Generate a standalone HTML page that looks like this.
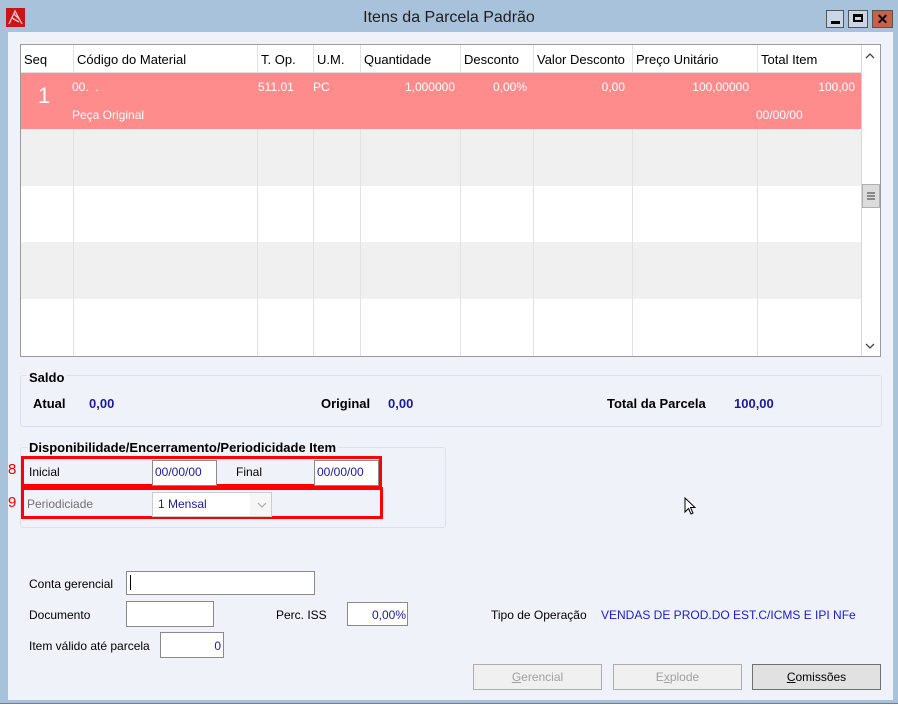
<!DOCTYPE html>
<html><head><meta charset="utf-8"><style>
*{box-sizing:border-box;margin:0;padding:0}
body{width:898px;height:708px;background:#fff;font-family:"Liberation Sans",sans-serif;font-size:12px;color:#000;position:relative;overflow:hidden}
.a{position:absolute}
.win{left:0;top:0;width:898px;height:704px;background:#a9c2dc;border-bottom:1px solid #6a7f95}
.body{left:8px;top:32px;width:885px;height:668px;background:#f0f2f9}
.t{position:absolute;white-space:nowrap}
.grid{left:20px;top:44px;width:861px;height:313px;border:1px solid #9a9a9a;background:#fff;overflow:hidden}
.hd{font-size:13px;top:7px}
.vl{position:absolute;top:0;width:1px;background:#e2e2e2;height:313px}
.w{color:#fff;font-size:12px}
.box{position:absolute;background:#fff;border:1px solid #8a8a8a}
.blue{color:#1a1aa0}
.btn{position:absolute;height:26px;border:1px solid #adadad;background:#f0f0f0;color:#a0a0a0;text-align:center;line-height:24px;font-size:12px}
</style></head><body>
<div class="a win"></div>
<div class="a" style="left:6px;top:8px;width:19px;height:19px;background:#c8151b"></div>
<svg class="a" style="left:6px;top:8px" width="19" height="19"><path d="M3 16 L9 3 L16 16 M6 10 L13 14 M8 6 L14 12" stroke="#f8c0c0" stroke-width="1.3" fill="none"/></svg>
<div class="t" style="left:0;width:898px;text-align:center;top:9px;font-size:16px;color:#1e1e1e">Itens da Parcela Padrão</div>
<div class="a" style="left:826px;top:10px;width:18px;height:18px;border:1px solid #555;background:#c8d6e6"></div>
<div class="a" style="left:831px;top:21px;width:9px;height:3px;background:#000"></div>
<div class="a" style="left:848px;top:10px;width:20px;height:18px;border:1px solid #555;background:#c8d6e6"></div>
<div class="a" style="left:853px;top:14px;width:10px;height:8px;border:2px solid #000;border-top-width:3px"></div>
<div class="a" style="left:872px;top:10px;width:21px;height:18px;border:1px solid #555;background:#c8604a;color:#000;font-weight:bold;text-align:center;line-height:16px;font-size:14px">✕</div>
<div class="a body"></div>

<div class="a grid">
 <div class="a" style="left:0;top:0;width:840px;height:28px;background:#fff;border-bottom:1px solid #e0e0e0"></div>
 <div class="a" style="left:0;top:84px;width:840px;height:57px;background:#f0f0f0"></div>
 <div class="a" style="left:0;top:197px;width:840px;height:57px;background:#f0f0f0"></div>
 <div class="vl" style="left:52px"></div><div class="vl" style="left:236px"></div><div class="vl" style="left:292px"></div><div class="vl" style="left:339px"></div><div class="vl" style="left:439px"></div><div class="vl" style="left:512px"></div><div class="vl" style="left:611px"></div><div class="vl" style="left:736px"></div>
 <div class="a" style="left:0;top:28px;width:840px;height:56px;background:#ff8c8c"></div>
 <div class="t hd" style="left:3px">Seq</div>
 <div class="t hd" style="left:56px">Código do Material</div>
 <div class="t hd" style="left:240px">T. Op.</div>
 <div class="t hd" style="left:296px">U.M.</div>
 <div class="t hd" style="left:343px">Quantidade</div>
 <div class="t hd" style="left:443px">Desconto</div>
 <div class="t hd" style="left:516px">Valor Desconto</div>
 <div class="t hd" style="left:615px">Preço Unitário</div>
 <div class="t hd" style="left:740px">Total Item</div>
 <div class="t w" style="left:17px;top:38px;font-size:22px">1</div>
 <div class="t w" style="left:51px;top:35px">00. &nbsp;.</div>
 <div class="t w" style="left:237px;top:35px">511.01</div>
 <div class="t w" style="left:292px;top:35px">PC</div>
 <div class="t w" style="right:425px;top:35px">1,000000</div>
 <div class="t w" style="right:353px;top:35px">0,00%</div>
 <div class="t w" style="right:255px;top:35px">0,00</div>
 <div class="t w" style="right:131px;top:35px">100,00000</div>
 <div class="t w" style="right:25px;top:35px">100,00</div>
 <div class="t w" style="left:51px;top:63px">Peça Original</div>
 <div class="t w" style="left:735px;top:63px">00/00/00</div>
 <div class="a" style="left:840px;top:0;width:19px;height:311px;background:#fff;border-left:1px solid #d8d8d8"></div>
 <svg class="a" style="left:843px;top:7px" width="12" height="8"><path d="M2 6 L6 2 L10 6" stroke="#444" fill="none" stroke-width="1.3"/></svg>
 <div class="a" style="left:841px;top:139px;width:18px;height:24px;background:#dcdcdc;border:1px solid #b0b0b0"></div>
 <svg class="a" style="left:844px;top:145px" width="12" height="12"><path d="M2 3 H10 M2 6 H10 M2 9 H10" stroke="#555" stroke-width="1.3"/></svg>
 <svg class="a" style="left:843px;top:297px" width="12" height="8"><path d="M2 2 L6 6 L10 2" stroke="#444" fill="none" stroke-width="1.3"/></svg>
</div>

<div class="a" style="left:20px;top:375px;width:862px;height:52px;border:1px solid #dde0e8;border-radius:3px"></div>
<div class="t" style="left:26px;top:370px;background:#f0f2f9;padding:0 3px;font-weight:bold;font-size:13px">Saldo</div>
<div class="t" style="left:33px;top:396px;font-weight:bold;font-size:13px">Atual</div>
<div class="t blue" style="left:89px;top:396px;font-weight:bold;font-size:13px">0,00</div>
<div class="t" style="left:321px;top:396px;font-weight:bold;font-size:13px">Original</div>
<div class="t blue" style="left:388px;top:396px;font-weight:bold;font-size:13px">0,00</div>
<div class="t" style="left:607px;top:396px;font-weight:bold;font-size:13px">Total da Parcela</div>
<div class="t blue" style="left:734px;top:396px;font-weight:bold;font-size:13px">100,00</div>

<div class="a" style="left:20px;top:447px;width:426px;height:81px;border:1px solid #dde0e8;border-radius:3px"></div>
<div class="t" style="left:27px;top:440px;background:#f0f2f9;padding:0 2px;font-weight:bold;font-size:13px">Disponibilidade/Encerramento/Periodicidade Item</div>
<div class="a" style="left:21px;top:456px;width:361px;height:31px;border:3px solid #f00"></div>
<div class="a" style="left:21px;top:487px;width:362px;height:32px;border:3px solid #f00"></div>
<div class="t" style="left:8px;top:461px;color:#e00;font-size:15px">8</div>
<div class="t" style="left:8px;top:494px;color:#e00;font-size:15px">9</div>
<div class="t" style="left:29px;top:465px">Inicial</div>
<div class="box" style="left:152px;top:460px;width:65px;height:26px"></div>
<div class="t blue" style="left:155px;top:465px">00/00/00</div>
<div class="t" style="left:236px;top:465px">Final</div>
<div class="box" style="left:314px;top:460px;width:65px;height:26px"></div>
<div class="t blue" style="left:317px;top:465px">00/00/00</div>
<div class="t" style="left:27px;top:497px;color:#707070">Periodiciade</div>
<div class="a" style="left:152px;top:492px;width:120px;height:25px;border:1px solid #ccc;background:#fff"></div>
<div class="a" style="left:250px;top:493px;width:21px;height:23px;background:#f6f6f6"></div>
<div class="t blue" style="left:158px;top:497px">1 Mensal</div>
<svg class="a" style="left:256px;top:501px" width="12" height="8"><path d="M2 2 L6 6 L10 2" stroke="#aaa" fill="none" stroke-width="1.2"/></svg>

<svg class="a" style="left:684px;top:497px" width="13" height="20"><path d="M1 1 L1 15 L4.5 11.5 L7 17 L9 16 L6.5 10.5 L11 10.5 Z" fill="#fff" stroke="#000" stroke-width="1"/></svg>

<div class="t" style="left:29px;top:577px">Conta gerencial</div>
<div class="box" style="left:126px;top:571px;width:189px;height:24px"></div>
<div class="a" style="left:130px;top:575px;width:1px;height:15px;background:#000"></div>
<div class="t" style="left:29px;top:608px">Documento</div>
<div class="box" style="left:126px;top:601px;width:88px;height:26px"></div>
<div class="t" style="left:276px;top:608px">Perc. ISS</div>
<div class="box" style="left:347px;top:602px;width:61px;height:24px"></div>
<div class="t blue" style="right:492px;top:608px">0,00%</div>
<div class="t" style="left:491px;top:608px">Tipo de Operação</div>
<div class="t" style="left:601px;top:608px;color:#1a1ad0">VENDAS DE PROD.DO EST.C/ICMS E IPI NFe</div>
<div class="t" style="left:29px;top:639px">Item válido até parcela</div>
<div class="box" style="left:160px;top:632px;width:64px;height:26px"></div>
<div class="t blue" style="right:677px;top:639px">0</div>
<div class="btn" style="left:473px;top:664px;width:129px"><u>G</u>erencial</div>
<div class="btn" style="left:613px;top:664px;width:129px">E<u>x</u>plode</div>
<div class="btn" style="left:752px;top:664px;width:129px;color:#000;background:#e1e1e1;border-color:#707070"><u>C</u>omissões</div>
</body></html>
